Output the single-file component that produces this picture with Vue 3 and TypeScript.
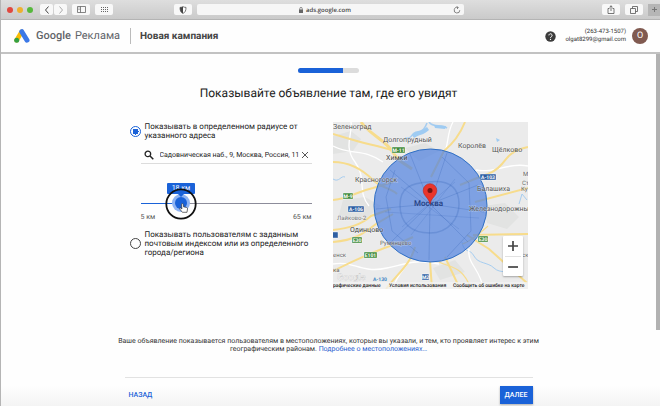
<script setup lang="ts">
import { computed, ref } from 'vue'

type Mode = 'radius' | 'region'

interface Place {
  name: string
  x: number
  y: number
  size: number
  color: string
}

interface Shield {
  name: string
  x: number
  y: number
  color: string
}

const mode = ref<Mode>('radius')
const address = ref('Садовническая наб., 9, Москва, Россия, 11')
const min = 5
const max = 65
const radius = ref(18)
const thumb = 12

const fraction = computed(() => (radius.value - min) / (max - min))
const sliderVars = computed(() => ({
  '--pos': `calc(${thumb / 2}px + (100% - ${thumb}px) * ${fraction.value})`,
}))

const towns: Place[] = [
  { name: 'Зеленоград', x: 0, y: 7, size: 7, color: '#555' },
  { name: 'Долгопрудный', x: 50, y: 20, size: 7, color: '#555' },
  { name: 'Химки', x: 53, y: 38, size: 7, color: '#444' },
  { name: 'Королёв', x: 125, y: 26, size: 7, color: '#555' },
  { name: 'Щёлково', x: 159, y: 30, size: 7, color: '#555' },
  { name: 'Красногорск', x: 22, y: 60, size: 7, color: '#555' },
  { name: 'Балашиха', x: 144, y: 69, size: 7, color: '#555' },
  { name: 'М', x: 190, y: 54, size: 6, color: '#666' },
  { name: 'Ст', x: 189, y: 63, size: 6, color: '#666' },
  { name: 'Ку', x: 188, y: 69, size: 6, color: '#666' },
  { name: 'Железнодорожны', x: 136, y: 89, size: 7, color: '#555' },
  { name: 'Лайково-2', x: 4, y: 98, size: 6, color: '#777' },
  { name: 'Одинцово', x: 17, y: 110, size: 7, color: '#444' },
  { name: 'Румянцево', x: 47, y: 123, size: 6, color: '#666' },
  { name: 'енск', x: 0, y: 135, size: 6, color: '#666' },
  { name: 'ка', x: 0, y: 150, size: 6, color: '#666' },
  { name: 'ск', x: 189, y: 135, size: 6, color: '#666' },
]

const shields: Shield[] = [
  { name: 'М-11', x: 59, y: 25, color: '#3f8a3c' },
  { name: 'М-9', x: 10, y: 71, color: '#3f8a3c' },
  { name: 'А-103', x: 147, y: 52, color: '#2e5fa3' },
  { name: 'А-106', x: 15, y: 84, color: '#2e5fa3' },
  { name: 'E30', x: 19, y: 115, color: '#3f8a3c' },
  { name: 'E101', x: 31, y: 130, color: '#3f8a3c' },
  { name: 'E30', x: 145, y: 114, color: '#3f8a3c' },
  { name: 'М2', x: 89, y: 152, color: '#2e5fa3' },
  { name: '', x: -9, y: 110, color: '#2e5fa3' },
]
</script>

<template>
  <div class="window">
    <div class="toolbar">
      <div class="left-tools">
        <span class="dots"><i class="red"></i><i class="amber"></i><i class="green"></i></span>
        <div class="pair">
          <button class="tool" type="button" aria-label="Назад">
            <svg width="6" height="10" viewBox="0 0 6 10"><path d="M4.500 1.500 1.500 5l3 3.500" fill="none" stroke="#444" /></svg>
          </button>
          <button class="tool" type="button" aria-label="Вперёд">
            <svg width="6" height="10" viewBox="0 0 6 10"><path d="M1.500 1.500 4.500 5l-3 3.500" fill="none" stroke="#aaa" /></svg>
          </button>
        </div>
        <button class="tool wide" type="button" aria-label="Боковая панель">
          <svg width="9" height="7" viewBox="0 0 9 7"><path d="M.5.5h8v6h-8zM3.500.5v6M1.500 2h1M1.500 3.500h1" fill="none" stroke="#666" stroke-width=".8" /></svg>
        </button>
        <button class="tool wide" type="button" aria-label="Вкладки">
          <svg width="9" height="7" viewBox="0 0 9 7"><path d="M1 1.500h8M1 3.500h8M1 5.500h8" fill="none" stroke="#666" stroke-dasharray="1 1" /></svg>
        </button>
      </div>
      <div class="address">
        <button class="tool wide" type="button" aria-label="Конфиденциальность">
          <svg width="8" height="8" viewBox="0 0 8 8"><path d="M4 .7c1 .5 2 .7 3 .7 0 3-.7 5-3 6-2.300-1-3-3-3-6 1 0 2-.2 3-.7z" fill="#fff" stroke="#555" stroke-width=".8" /><path d="M4 .7v6.700c-2.300-1-3-3-3-6 1 0 2-.2 3-.7z" fill="#444" /></svg>
        </button>
        <div class="url">
          <span class="host">
            <svg width="4" height="6" viewBox="0 0 4 6"><path d="M0 2.500h4V6H0z" fill="#666" /><path d="M.8 3V1.600a1.200 1.200 0 0 1 2.400 0V3" fill="none" stroke="#666" stroke-width=".7" /></svg>
            ads.google.com
          </span>
          <svg width="8" height="8" viewBox="0 0 8 8"><path d="M6.800 4.200A2.800 2.800 0 1 1 5 1.600M3.800.2 5.300 1.700 4 3" fill="none" stroke="#666" stroke-width=".8" /></svg>
        </div>
      </div>
      <div class="right-tools">
        <button class="tool wide" type="button" aria-label="Поделиться">
          <svg width="8" height="9" viewBox="0 0 8 9"><path d="M2.500 3.500H1v5h6v-5H5.500M4 6V.8M2.500 2.200 4 .8l1.500 1.400" fill="none" stroke="#555" stroke-width=".8" /></svg>
        </button>
        <button class="tool wide" type="button" aria-label="Все вкладки">
          <svg width="8" height="8" viewBox="0 0 8 8"><path d="M.5 2.500h5v5h-5zM2.500 2.500v-2h5v5h-2" fill="none" stroke="#555" stroke-width=".8" /></svg>
        </button>
        <button class="plus" type="button" aria-label="Новая вкладка">
          <svg width="7" height="7" viewBox="0 0 7 7"><path d="M3.500 1v5M1 3.500h5" stroke="#777" /></svg>
        </button>
      </div>
    </div>

    <header class="header">
      <svg width="16" height="14" viewBox="0 0 16 14">
        <path d="M7.600 2.900 2.700 11.200" stroke="#fbbc04" stroke-width="4.600" stroke-linecap="round" />
        <path d="M7.800 2.700 13 11.200" stroke="#3b78e7" stroke-width="5" stroke-linecap="round" />
        <circle cx="2.700" cy="11.200" r="2.500" fill="#34a043" />
      </svg>
      <span class="brand"><b>Google</b><span>Реклама</span></span>
      <span class="campaign">Новая кампания</span>
      <div class="account">
        <svg width="11" height="11" viewBox="0 0 11 11">
          <circle cx="5.500" cy="5.500" r="5.200" fill="#3c3c3c" />
          <path d="M3.900 4.400a1.600 1.600 0 1 1 2.500 1.300c-.6.4-.9.700-.9 1.300" fill="none" stroke="#fff" stroke-width="1" />
          <circle cx="5.500" cy="8.400" r=".65" fill="#fff" />
        </svg>
        <p class="who">(263-473-1507)<br />olgat8299@gmail.com</p>
        <span class="avatar">O</span>
      </div>
    </header>

    <div class="page">
      <main class="content">
        <div class="progress"><span></span></div>
        <h1>Показывайте объявление там, где его увидят</h1>

        <div class="columns">
          <form class="options" @submit.prevent>
            <label class="option">
              <input v-model="mode" type="radio" name="mode" value="radius" />
              <span>Показывать в определенном радиусе от указанного адреса</span>
            </label>
            <div class="nested">
              <div class="search">
                <svg width="10" height="10" viewBox="0 0 10 10"><circle cx="3.900" cy="3.900" r="2.800" fill="none" stroke="#222" stroke-width="1.300" /><path d="m6 6 3.300 3.300" stroke="#222" stroke-width="1.500" /></svg>
                <input v-model="address" type="text" aria-label="Адрес" />
                <button type="button" aria-label="Очистить" @click="address = ''">
                  <svg width="8" height="8" viewBox="0 0 8 8"><path d="m1 1 6 6M7 1 1 7" stroke="#444" stroke-width=".9" /></svg>
                </button>
              </div>
              <div class="slider" :style="sliderVars">
                <input v-model.number="radius" type="range" :min="min" :max="max" aria-label="Радиус, км" />
                <output class="bubble">{{ radius }} км</output>
                <svg class="pointer" width="32" height="32" viewBox="0 0 32 32">
                  <circle cx="16" cy="16" r="14.700" fill="none" stroke="#111" stroke-width="1.800" />
                  <path d="M16.500 16.500c0-1.200 1.700-1.200 1.700 0l.3 2.300 2.800.6c1 .2 1.300.8 1.200 1.600l-.5 3.300h-4.600l-2.600-3.200c-.5-.8.4-1.500 1.100-.9l1 .7z" fill="#fff" stroke="#333" stroke-width=".7" />
                </svg>
              </div>
              <div class="scale"><span>{{ min }} км</span><span>{{ max }} км</span></div>
            </div>
            <label class="option">
              <input v-model="mode" type="radio" name="mode" value="region" />
              <span>Показывать пользователям с заданным почтовым индексом или из определенного города/региона</span>
            </label>
          </form>

          <div class="map">
            <svg class="canvas" viewBox="0 0 195 167">
              <rect width="195" height="167" fill="#ebebeb" />
              <g fill="#e2e3e2">
                <path d="M0 14 18 9l10 8-8 12-20 3zM150 84l22-3 14 14-12 12-20-6zM72 26l20-5 14 8-20 10zM10 78l22-3 16 9-18 15-24-6zM100 146l22-8 10 12-25 8z" />
              </g>
              <g fill="none" stroke="#a6cdf0" stroke-width="1.600">
                <path d="M72 16c8 2 6-6 12-6s8-4 10-9M96 0c4 6 12 2 18 6" />
                <path d="M129 120c2 12 8 6 12 14s14 6 20 12 16 2 22 6" stroke-width="1" />
                <path d="M186 82l3-10 5 6M0 57c6 4 8-4 12-2" stroke-width="1" />
              </g>
              <path d="M79 13c5-5 9-3 15-8l2 3c-5 5-9 4-15 8zM101 3l12 1-1 3-10-1zM163 16l4 2-3 2z" fill="#9ecbf2" />
              <g fill="none" stroke="#fff" stroke-width="1.300">
                <path d="M0 24c20 10 30 2 50 16M18 0c2 12-8 24 4 40s2 30 14 44M120 0c-8 14-2 26-14 38M195 44c-20-4-34 8-52 4M0 142c20-4 28 10 54 4s28-8 52-4M150 167c-2-20-16-24-14-40M60 167c4-18 16-20 18-36" />
              </g>
              <g fill="none" stroke="#f7dc8c" stroke-width="2">
                <path d="M28 0c8 12 24 18 31 29s10 11 20 18" stroke-width="3" />
                <path d="M0 12c18 5 25 8 44 12l15 4M0 40c18 0 32 10 40 18s18 8 24 14" />
                <path d="M132 0c-4 10-10 20-21 29L98 55M195 25c-18 4-20 10-26 17s-12 10-20 12l-22 9" />
                <path d="M0 78c18-2 22-8 40-12l20-6M0 108c16-2 28-5 38-14l20-7M0 120c22-2 30-8 43-18l17-10" />
                <path d="M0 149c20-10 46-22 69-29l11-5M53 167c12-16 24-24 29-42M97 139l2 28M112 135l15 32M134 113l22 14 38 34M140 113l55-1M142 80l53-14" />
                <path d="M155 104c-8 7-18 16-26 18M106 140c12 6 24 4 32 27" stroke-width="1.200" />
              </g>
              <circle cx="97.500" cy="83.500" r="56.500" fill="#4a7ede" fill-opacity=".68" stroke="#2f6fc4" />
              <g fill="none" stroke="#315fb5" stroke-opacity=".25">
                <path d="M95 60c24-3 31 8 31 22s-10 29-29 29-30-10-30-28 12-22 28-23z" stroke-width="1.500" />
                <path d="M97 82 77 32M97 82l17-51M97 82l48-19M97 82l54 8M97 82l38 38M97 82l-1 56M97 82l-39 38M97 82l-54 5M97 82 57 48M109 35l27 26 2 48-24 26M62 48l-9 27 6 34 26 22" />
                <path d="m68 65 58 42M69 105l53-45M78 113l44-56M52 90l94 6" stroke-width=".7" />
              </g>
              <g v-for="(s, i) in shields" :key="i">
                <rect :x="s.x" :y="s.y" :width="s.name ? s.name.length * 3 + 1 : 14" height="6" rx=".6" :fill="s.color" stroke="#fff" stroke-width=".4" />
                <text :x="s.x + (s.name.length * 3 + 1) / 2" :y="s.y + 5" text-anchor="middle" font-size="5" font-weight="700" fill="#fff">{{ s.name }}</text>
              </g>
              <text v-for="t in towns" :key="t.name" class="town" :x="t.x" :y="t.y" :font-size="t.size" :fill="t.color">{{ t.name }}</text>
              <text x="81" y="84" font-size="8" font-weight="500" fill="#243f82">Москва</text>
              <path d="M97 82c-.8-6-6.800-8-6.800-13.500a6.800 6.800 0 0 1 13.600 0C103.800 74 97.800 76 97 82z" fill="#e9352c" stroke="#b82720" stroke-width=".6" />
              <circle cx="97" cy="68.500" r="2.500" fill="#741512" />
              <text x="4" y="158" font-size="9" font-weight="500" fill="#fff" stroke="#bbb" stroke-width=".3">Google</text>
              <text x="40" y="159" font-size="5" font-weight="700" fill="#3a84c4">А-130</text>
              <rect y="160" width="195" height="7" fill="#f3f3f3" fill-opacity=".75" />
              <g font-size="5" fill="#222" font-weight="500">
                <text x="0" y="165">рафические данные</text>
                <text x="56" y="165">Условия использования</text>
                <text x="120" y="165">Сообщить об ошибке на карте</text>
              </g>
            </svg>
            <div class="zoom">
              <button type="button" aria-label="Увеличить"><svg width="10" height="10" viewBox="0 0 10 10"><path d="M5 0v10M0 5h10" stroke="#444" stroke-width="1.700" /></svg></button>
              <button type="button" aria-label="Уменьшить"><svg width="10" height="10" viewBox="0 0 10 10"><path d="M0 5h10" stroke="#444" stroke-width="1.700" /></svg></button>
            </div>
          </div>
        </div>

        <p class="note">
          Ваше объявление показывается пользователям в местоположениях, которые вы указали, и тем, кто проявляет интерес к этим географическим районам. <a href="#">Подробнее о местоположениях…</a>
        </p>
        <footer class="actions">
          <button class="back" type="button">НАЗАД</button>
          <button class="next" type="button">ДАЛЕЕ</button>
        </footer>
      </main>
      <div class="scrollbar"></div>
    </div>
  </div>
</template>

<style>
body {
  background: #fefefe;
}
</style>

<style scoped>
* {
  box-sizing: border-box;
}

.window {
  min-height: 100vh;
  display: flex;
  flex-direction: column;
  border-left: 1px solid #b5b5b5;
  font-family: Roboto, "Liberation Sans", sans-serif;
  font-size: 7px;
  color: #222;
  text-rendering: geometricPrecision;
}

button {
  display: flex;
  align-items: center;
  justify-content: center;
  padding: 0;
  border: 0;
  background: none;
  font: inherit;
  color: inherit;
}

svg {
  display: block;
  flex: none;
}

.toolbar {
  display: grid;
  grid-template-columns: 15fr 290px 17fr;
  align-items: center;
  height: 20px;
  background: linear-gradient(#dedede, #cacaca);
  border-bottom: 1px solid #b4b4b4;
}

.left-tools,
.right-tools,
.address {
  display: flex;
  align-items: center;
}

.left-tools {
  padding-left: 6px;
  gap: 5px;
}

.dots {
  display: flex;
  gap: 4px;
  margin-right: 2px;
}

.dots i {
  width: 6px;
  height: 6px;
  border-radius: 50%;
}

.red {
  background: #e0483f;
}

.amber {
  background: #eeb02f;
}

.green {
  background: #55b83c;
}

.pair {
  display: flex;
  gap: 1px;
}

.tool {
  width: 13px;
  height: 11px;
  border-radius: 2px;
  background: #f8f8f8;
}

.tool.wide {
  width: 18px;
}

.address {
  gap: 5px;
}

.url {
  flex: 1;
  display: flex;
  align-items: center;
  height: 11px;
  padding-right: 3px;
  border-radius: 2px;
  background: #f6f6f6;
}

.host {
  flex: 1;
  display: flex;
  align-items: center;
  justify-content: center;
  gap: 3px;
  font-family: "Open Sans", sans-serif;
  font-size: 6px;
  font-weight: 600;
  color: #444;
}

.right-tools {
  justify-content: flex-end;
  gap: 5px;
}

.plus {
  width: 12px;
  height: 12px;
  align-self: flex-end;
  background: #b6b6b6;
}

.header {
  display: flex;
  align-items: center;
  height: 34px;
  padding: 0 12px 0 13px;
  border-bottom: 2px solid #c2c2c2;
}

.brand {
  display: flex;
  gap: 4px;
  margin-left: 6px;
  padding-right: 10px;
  border-right: 1px solid #bbb;
  font-size: 11px;
  line-height: 16px;
  color: #5f6368;
}

.brand b {
  font-weight: 500;
}

.campaign {
  margin-left: 9px;
  font-size: 10px;
  font-weight: 700;
  color: #444;
}

.account {
  display: flex;
  align-items: center;
  margin-left: auto;
}

.who {
  margin: 0 6px 0 9px;
  font-size: 6px;
  line-height: 8px;
  text-align: right;
  color: #333;
}

.avatar {
  display: grid;
  place-items: center;
  width: 16px;
  height: 16px;
  border-radius: 50%;
  background: #805a50;
  color: #fff;
  font-size: 9px;
}

.page {
  flex: 1;
  display: flex;
  background: linear-gradient(#fefefe 94%, #f4f4f4);
}

.content {
  flex: 1;
  max-width: 408px;
  margin: 0 auto;
  padding: 14px 0 2px;
}

.scrollbar {
  width: 4px;
  height: 276px;
  background: #b2b2b2;
}

.progress {
  width: 61px;
  height: 5px;
  margin: 0 auto;
  border-radius: 3px;
  background: #dcdcdc;
  overflow: hidden;
}

.progress span {
  display: block;
  width: 73%;
  height: 100%;
  background: #1a62d8;
}

h1 {
  margin: 10px 0 19px;
  font-size: 12px;
  line-height: 20px;
  font-weight: 400;
  text-align: center;
}

.columns {
  display: grid;
  grid-template-columns: 182px 195px;
  justify-content: space-between;
  padding: 0 5px;
}

.option {
  display: flex;
  align-items: center;
  gap: 4px;
  font-size: 8px;
  line-height: 9px;
}

.option input {
  appearance: none;
  flex: none;
  width: 11px;
  height: 11px;
  margin: 0;
  border: 1px solid #444;
  border-radius: 50%;
}

.option input:checked {
  border-color: #1a62d8;
  background: radial-gradient(#1a62d8 0 3px, #fff 3px);
}

.nested {
  padding: 7px 0 8px 11px;
}

.search {
  display: flex;
  align-items: center;
  height: 17px;
  padding: 0 3px;
  border-bottom: 1px solid #dcdcdc;
}

.search input {
  flex: 1;
  min-width: 0;
  margin: 0 1px 0 6px;
  padding: 0;
  border: 0;
  background: none;
  font: 7px Roboto, "Liberation Sans", sans-serif;
  text-rendering: inherit;
  color: #222;
}

.slider {
  position: relative;
  margin-top: 33px;
}

.slider > input {
  appearance: none;
  display: block;
  width: 100%;
  height: 12px;
  margin: 0;
  background: linear-gradient(#1a62d8, #1a62d8) left center / var(--pos) 1px no-repeat, linear-gradient(#8c8c9a, #8c8c9a) center / 100% 1px no-repeat;
}

.slider > input::-webkit-slider-thumb {
  appearance: none;
  width: 12px;
  height: 12px;
  border-radius: 50%;
  background: #1a62d8;
  box-shadow: 0 0 0 3px #8fb4f3;
}

.bubble {
  position: absolute;
  left: var(--pos);
  bottom: 15px;
  width: 28px;
  transform: translateX(-50%);
  border-radius: 1px;
  background: #1a62d8;
  color: #fff;
  line-height: 11px;
  text-align: center;
}

.bubble::after {
  content: "";
  position: absolute;
  left: 11px;
  top: 100%;
  border: 3px solid transparent;
  border-top-color: #1a62d8;
}

.pointer {
  position: absolute;
  left: var(--pos);
  top: -9px;
  transform: translateX(-50%);
  pointer-events: none;
}

.scale {
  display: flex;
  justify-content: space-between;
  margin-top: 4px;
  line-height: 9px;
  color: #555;
}

.map {
  position: relative;
}

.canvas {
  width: 100%;
}

.town {
  paint-order: stroke;
  stroke: #fff;
  stroke-width: 1px;
  stroke-opacity: 0.4;
}

.zoom {
  position: absolute;
  right: 5px;
  bottom: 13px;
  width: 20px;
  padding: 0 2px;
  border-radius: 1px;
  background: #fff;
  box-shadow: 0 1px 2px rgb(0 0 0 / 30%);
}

.zoom button {
  width: 16px;
  height: 20px;
}

.zoom button + button {
  border-top: 1px solid #e2e2e2;
}

.note {
  margin: 48px -8px 24px;
  line-height: 8px;
  text-align: center;
  color: #333;
}

.note a {
  color: #2a5fd0;
  text-decoration: none;
}

.actions {
  display: flex;
  align-items: center;
  justify-content: space-between;
  padding: 8px 0 0 4px;
  border-top: 1px solid #e2e2e2;
  font-weight: 500;
}

.back {
  color: #1a62d8;
}

.next {
  width: 33px;
  height: 18px;
  background: #1a62d8;
  color: #fff;
  box-shadow: 0 1px 2px rgb(0 0 0 / 30%);
}
</style>
